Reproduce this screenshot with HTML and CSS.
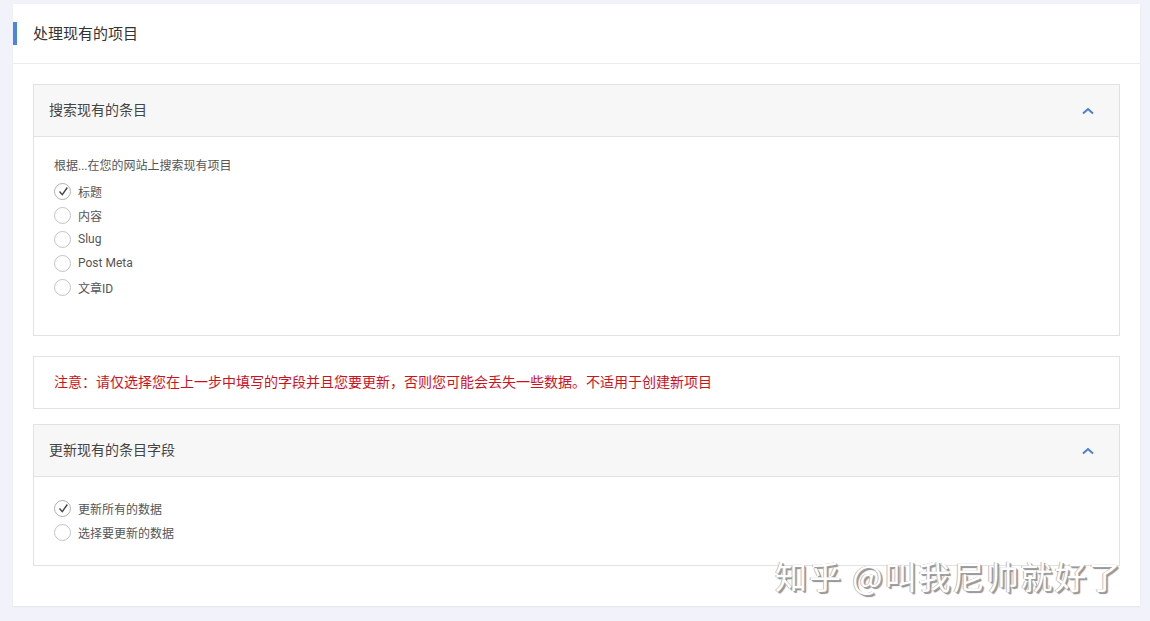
FILE: index.html
```html
<!DOCTYPE html>
<html lang="zh">
<head>
<meta charset="utf-8">
<link rel="stylesheet" href="styles.css">
</head>
<body>
<div class="card">
  <div class="card-header"><span class="bar"></span><span class="card-title">处理现有的项目</span></div>
  <div class="card-body">
    <div class="panel">
      <div class="panel-header"><span>搜索现有的条目</span>
        <svg class="chev" width="14" height="10" viewBox="0 0 14 10"><path d="M2 7.5 L7 3 L12 7.5" fill="none" stroke="#4a7fd6" stroke-width="2"/></svg>
      </div>
      <div class="panel-body p1">
        <div class="lead">根据...在您的网站上搜索现有项目</div>
        <div class="opt"><span class="radio checked"><svg width="11" height="11" viewBox="0 0 11 11"><path d="M1.5 5.5 L4.3 8.6 L9.3 1.5" fill="none" stroke="#444" stroke-width="1.4"/></svg></span>标题</div>
        <div class="opt"><span class="radio"></span>内容</div>
        <div class="opt"><span class="radio"></span>Slug</div>
        <div class="opt"><span class="radio"></span>Post Meta</div>
        <div class="opt"><span class="radio"></span>文章ID</div>
      </div>
    </div>
    <div class="notice">注意：请仅选择您在上一步中填写的字段并且您要更新，否则您可能会丢失一些数据。不适用于创建新项目</div>
    <div class="panel p2wrap">
      <div class="panel-header"><span>更新现有的条目字段</span>
        <svg class="chev" width="14" height="10" viewBox="0 0 14 10"><path d="M2 7.5 L7 3 L12 7.5" fill="none" stroke="#4a7fd6" stroke-width="2"/></svg>
      </div>
      <div class="panel-body p2">
        <div class="opt"><span class="radio checked"><svg width="11" height="11" viewBox="0 0 11 11"><path d="M1.5 5.5 L4.3 8.6 L9.3 1.5" fill="none" stroke="#444" stroke-width="1.4"/></svg></span>更新所有的数据</div>
        <div class="opt"><span class="radio"></span>选择要更新的数据</div>
      </div>
    </div>
  </div>
</div>
<div class="watermark">知乎 @叫我尼帅就好了</div>
</body>
</html>
```
FILE: styles.css
```css
* { box-sizing: border-box; }
html, body { margin: 0; }
body {
  background: #f1f2fa;
  padding: 4px 10px 0 13px;
  font-family: Roboto, "Noto Sans CJK SC", sans-serif;
  color: #444;
  position: relative;
  height: 621px;
  overflow: hidden;
}
.card {
  width: 1127px;
  background: #fff;
  box-shadow: 0 1px 2px rgba(0,0,0,0.06);
}
.card-header {
  height: 60px;
  border-bottom: 1px solid #ececf0;
  display: flex;
  align-items: center;
}
.bar {
  width: 4px;
  height: 23px;
  background: #4a86e0;
  margin-right: 16px;
}
.card-title {
  font-size: 15px;
  color: #333;
  padding-bottom: 3px;
}
.card-body {
  padding: 20px 20px 40px 20px;
}
.panel {
  border: 1px solid #e2e2e2;
}
.panel-header {
  height: 52px;
  background: #f7f7f7;
  border-bottom: 1px solid #e2e2e2;
  display: flex;
  align-items: center;
  justify-content: space-between;
  padding: 0 24px 3px 15px;
  font-size: 14px;
  color: #444;
}
.chev { display: block; margin-top: 4px; }
.panel-body {
  padding: 20px 20px 36px 20px;
  font-size: 12px;
  color: #555;
}
.panel-body.p2 { padding: 19px 20px 21px 20px; }
.lead {
  line-height: 18px;
  margin-bottom: 4px;
}
.opt {
  height: 24px;
  display: flex;
  align-items: center;
}
.radio {
  width: 17px;
  height: 17px;
  border: 1.5px solid #c4c4c4;
  border-radius: 50%;
  margin-right: 7px;
  display: flex;
  align-items: center;
  justify-content: center;
}
.radio.checked { border-color: #b0b0b0; }
.radio svg { display: block; margin-left: 1px; }
.notice {
  margin: 20px 0 15px;
  height: 53px;
  border: 1px solid #e2e2e2;
  display: flex;
  align-items: center;
  padding: 0 0 3px 20px;
  font-size: 14px;
  color: #d0101b;
}
.watermark {
  position: absolute;
  left: 775px;
  top: 552px;
  font-size: 32px;
  letter-spacing: 2px;
  color: #fff;
  font-family: "Noto Sans CJK SC", sans-serif;
  text-shadow: 1px 1px 0 #a0a0a0, -1px 0 0 #c0c0c0, 2px 2px 1px #909090;
  white-space: nowrap;
}
```
